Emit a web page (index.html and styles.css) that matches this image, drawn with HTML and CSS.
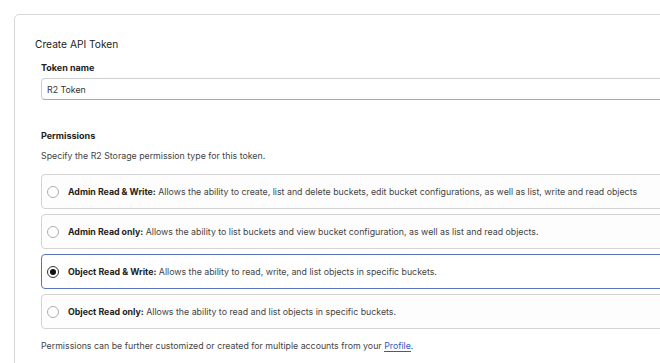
FILE: index.html
```html
<!DOCTYPE html>
<html lang="en">

<head>
    <meta charset="UTF-8">
    <meta name="viewport" content="width=device-width, initial-scale=1.0">
    <title>Create API Token</title>
    <link rel="stylesheet" href="styles.css">
</head>

<body>

    <div class="card">
        <h1 class="card-title">Create API Token</h1>

        <div class="form">
            <!-- Token name -->
            <label class="field-label" for="tokenName">Token name</label>
            <input class="text-input" type="text" id="tokenName" value="R2 Token">

            <!-- Permissions -->
            <h2 class="section-title">Permissions</h2>
            <p class="section-desc">Specify the R2 Storage permission type for this token.</p>

            <div class="options">
                <label class="option">
                    <input type="radio" name="perm">
                    <span class="radio"></span>
                    <span class="option-text"><b>Admin Read &amp; Write:</b> Allows the ability to create, list and delete buckets, edit bucket configurations, as well as list, write and read objects</span>
                </label>
                <label class="option">
                    <input type="radio" name="perm">
                    <span class="radio"></span>
                    <span class="option-text"><b>Admin Read only:</b> Allows the ability to list buckets and view bucket configuration, as well as list and read objects.</span>
                </label>
                <label class="option">
                    <input type="radio" name="perm" checked>
                    <span class="radio"></span>
                    <span class="option-text"><b>Object Read &amp; Write:</b> Allows the ability to read, write, and list objects in specific buckets.</span>
                </label>
                <label class="option">
                    <input type="radio" name="perm">
                    <span class="radio"></span>
                    <span class="option-text"><b>Object Read only:</b> Allows the ability to read and list objects in specific buckets.</span>
                </label>
            </div>

            <p class="note">Permissions can be further customized or created for multiple accounts from your <a href="#">Profile</a>.</p>
        </div>
    </div>

</body>

</html>
```

FILE: styles.css
```css
/* Reset */
* {
    margin: 0;
    padding: 0;
    box-sizing: border-box;
}

body {
    background-color: #ffffff;
    font-family: "Inter", "Liberation Sans", sans-serif;
    color: #3a3a3a;
    height: 100vh;
    overflow: hidden;
    padding: 14px 0 0 14px;
}

/* Tarjeta */
.card {
    width: 760px;
    height: 400px;
    border: 1px solid #d6d6d6;
    border-radius: 5px;
    padding: 21px 0 0 20px;
}

.card-title {
    font-size: 10.2px;
    font-weight: 400;
    color: #222;
    line-height: 16px;
}

.form {
    padding-left: 6px;
    margin-top: 10px;
}

.field-label {
    display: block;
    font-size: 9px;
    font-weight: 700;
    color: #222;
    line-height: 12px;
    margin-bottom: 4px;
}

.text-input {
    display: block;
    width: 100%;
    height: 22px;
    border: 1px solid #cfcfcf;
    border-bottom-color: #a9a9a9;
    border-radius: 4px;
    padding: 0 5px;
    font-family: inherit;
    font-size: 8.8px;
    color: #333;
    outline: none;
}

.section-title {
    font-size: 9px;
    font-weight: 700;
    color: #222;
    line-height: 12px;
    margin-top: 30px;
}

.section-desc {
    font-size: 8.8px;
    line-height: 12px;
    margin-top: 8px;
    color: #444;
}

/* Opciones */
.options {
    display: flex;
    flex-direction: column;
    gap: 5px;
    margin-top: 12px;
}

.option {
    display: flex;
    align-items: center;
    height: 35px;
    border: 1px solid #d3d3d3;
    border-radius: 4px;
    padding-left: 5px;
    background-color: #fdfdfd;
    font-size: 8.8px;
    color: #444;
    cursor: pointer;
}

.option b {
    color: #222;
    font-weight: 700;
}

.option input {
    display: none;
}

.radio {
    width: 12px;
    height: 12px;
    border: 1px solid #b0b0b0;
    border-radius: 50%;
    margin-right: 9px;
    position: relative;
    flex-shrink: 0;
}

.option:has(input:checked) {
    border-color: #5a75b8;
    background-color: #fff;
}

.option input:checked + .radio {
    border-color: #333;
}

.option input:checked + .radio::after {
    content: '';
    position: absolute;
    width: 6px;
    height: 6px;
    top: 2px;
    left: 2px;
    border-radius: 50%;
    background: #111;
}

.option-text {
    white-space: nowrap;
}

.note {
    font-size: 8.8px;
    line-height: 12px;
    margin-top: 11px;
    color: #444;
}

.note a {
    color: #2c5cc5;
    text-decoration: none;
    border-bottom: 1px solid #2c5cc5;
}
```
